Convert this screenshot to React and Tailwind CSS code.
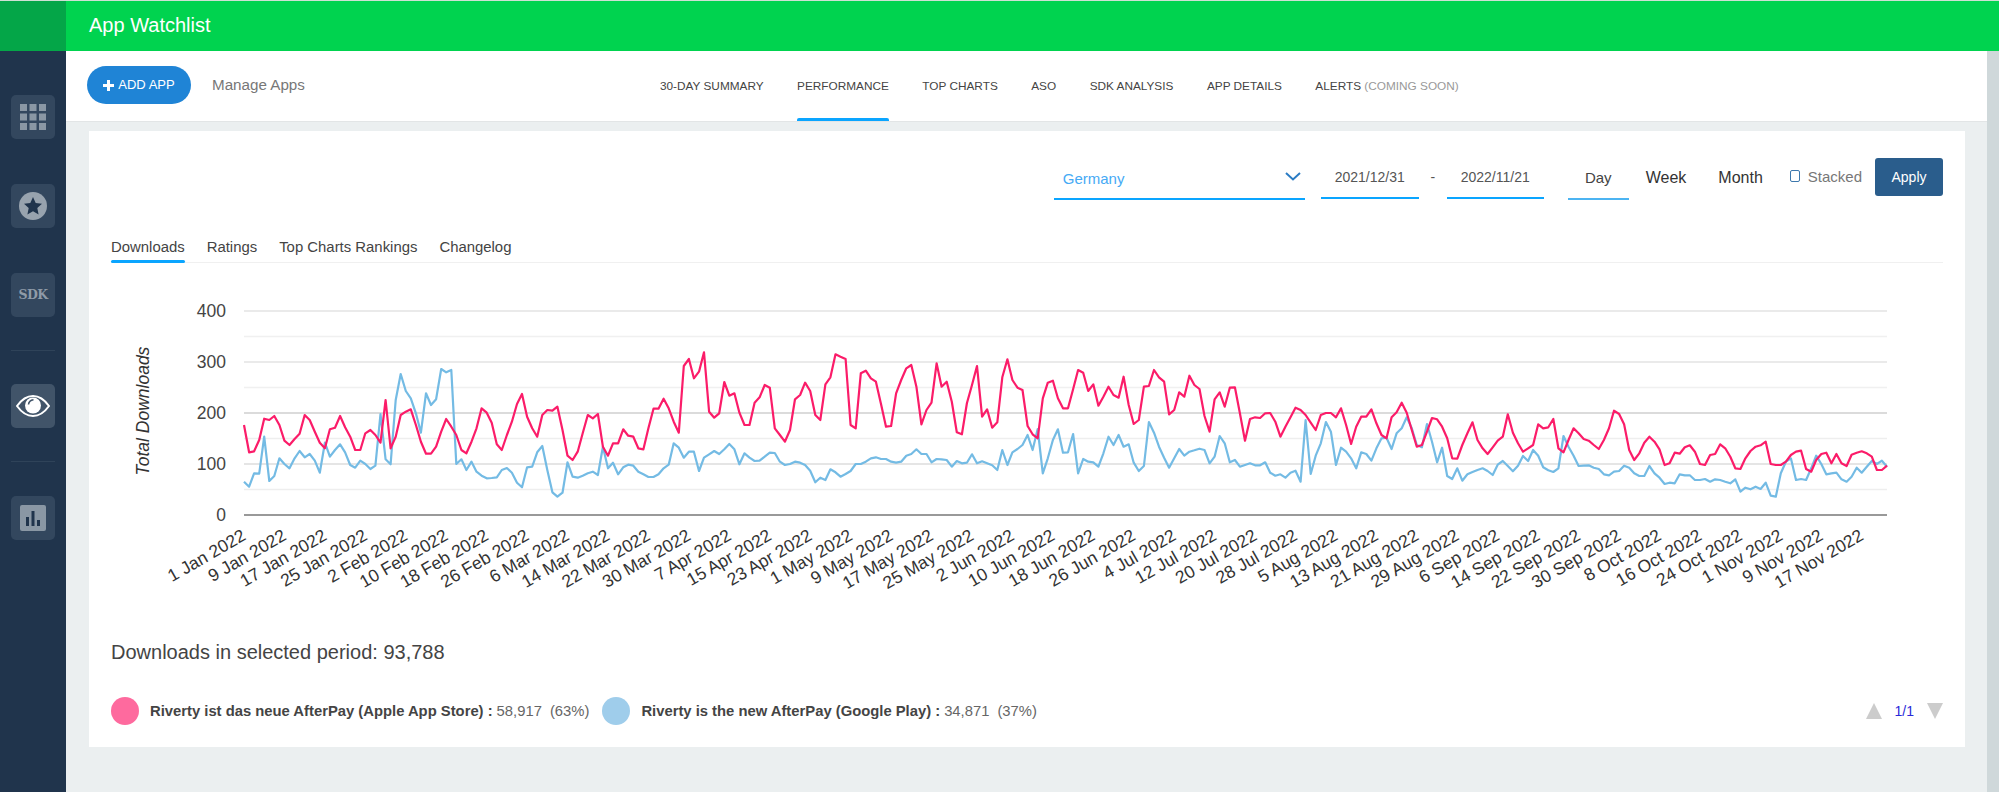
import React from "react";

// traced series: each number is a y position on the chart, 3 units per pixel, 675 = zero line
const PINK = [
  405,487,484,450,386,390,378,405,452,465,447,431,375,390,425,458,475,418,413,378,412,440,480,480,430,420,435,458,330,475,440,375,365,358,405,455,491,491,470,425,387,410,435,480,490,455,415,355,368,398,463,480,435,395,342,312,
  380,415,440,375,360,362,350,420,497,510,485,430,375,385,372,470,497,460,460,418,437,440,475,478,415,356,356,326,355,395,428,228,207,265,245,187,365,383,370,276,317,310,368,405,405,338,322,285,293,415,435,455,420,328,315,278,303,375,390,283,262,193,200,207,405,415,250,242,265,275,342,410,408,310,270,235,225,290,403,360,338,220,
  290,275,335,427,433,340,285,228,380,358,413,397,262,208,270,293,300,408,433,445,325,278,272,325,355,355,298,240,248,303,283,347,320,290,315,323,260,345,402,390,290,288,240,262,275,373,360,307,320,257,285,297,378,425,328,307,350,293,292,370,452,387,382,384,370,369,395,440,410,382,353,360,375,398,420,375,369,369,382,355,
  405,462,410,380,380,358,400,435,445,382,367,338,368,420,470,465,425,384,388,410,445,505,506,465,430,397,450,475,492,472,452,440,373,428,460,485,475,465,403,415,412,387,475,487,450,415,430,447,452,465,477,450,415,362,372,403,480,510,490,458,440,455,478,525,520,488,491,472,466,485,522,525,495,492,463,475,500,535,537,
  505,483,470,466,455,522,525,525,515,495,485,482,537,545,510,492,488,520,492,520,528,494,488,484,490,500,540,540,527,
];

const BLUE = [
  575,590,550,551,440,573,558,505,522,535,505,483,502,492,512,548,458,500,480,463,487,525,533,512,522,537,527,372,508,523,330,252,303,325,370,428,310,345,328,237,247,240,522,508,540,515,545,557,565,564,562,540,534,548,578,592,
  532,530,487,468,540,607,620,608,517,560,563,557,550,545,555,470,535,518,553,532,524,527,545,553,561,561,553,535,524,460,473,503,485,485,543,503,493,483,492,478,462,478,523,490,503,513,512,500,488,489,515,525,522,515,518,525,542,577,563,570,538,547,560,552,543,522,522,515,505,502,507,507,515,518,515,497,492,478,492,492,
  517,507,508,510,530,513,520,518,493,520,514,520,526,540,480,525,487,477,465,435,480,417,550,505,450,418,488,487,432,550,507,515,517,530,490,440,465,435,470,463,518,543,528,396,428,470,503,533,505,477,497,485,481,476,480,520,500,438,460,517,510,530,525,520,526,526,517,548,557,553,563,548,542,575,390,552,497,
  460,396,425,525,473,485,505,535,487,492,512,475,445,443,477,430,415,382,415,465,472,402,455,517,473,558,567,535,572,553,546,540,535,543,555,524,513,528,544,527,498,513,480,497,532,541,546,535,438,470,497,528,527,526,533,537,553,556,545,543,527,533,550,558,558,528,550,563,582,578,580,553,556,556,570,570,567,575,568,570,575,580,568,
  605,593,598,590,597,578,617,620,550,515,505,570,567,570,535,497,522,553,550,548,568,575,560,533,548,530,513,522,512,530,
];

const MONTHS = ["Jan", "Feb", "Mar", "Apr", "May", "Jun", "Jul", "Aug", "Sep", "Oct", "Nov", "Dec"];

// svg starts at page x 89, y 265
const X0 = 155;
const X1 = 1798;
const STEP = (X1 - X0) / 325;
const toY = (v) => 25 + v / 3;
const points = (arr) => arr.map((v, i) => `${(X0 + i * STEP).toFixed(1)},${toY(v).toFixed(1)}`).join(" ");

const GRID = [
  { y: 46, c: "#e3e3e3" },
  { y: 71.5, c: "#f0f0f0" },
  { y: 97, c: "#e3e3e3" },
  { y: 122.5, c: "#f0f0f0" },
  { y: 148, c: "#cfcfcf" },
  { y: 173.5, c: "#eeeeee" },
  { y: 199, c: "#dddddd" },
  { y: 224.5, c: "#eeeeee" },
];

const TICKS = [
  { y: 46, t: "400" },
  { y: 97, t: "300" },
  { y: 148, t: "200" },
  { y: 199, t: "100" },
  { y: 250, t: "0" },
];

const dateLabels = [];
for (let i = 0; i <= 320; i += 8) {
  const d = new Date(Date.UTC(2022, 0, 1 + i));
  dateLabels.push({ i, t: `${d.getUTCDate()} ${MONTHS[d.getUTCMonth()]} 2022` });
}

const Tile = ({ active, children, className }) => (
  <div className={`w-[44px] h-[44px] rounded-[5px] flex items-center justify-center ${active ? "bg-[#415469]" : "bg-[#33475e]"} ${className || ""}`}>
    {children}
  </div>
);

const Sidebar = () => (
  <div className="w-[66px] shrink-0 bg-[#20344c] flex flex-col items-center pt-[44px]">
    <Tile>
      <svg width="26" height="26" viewBox="0 0 26 26" fill="#8a97a4">
        {[0, 9.5, 19].map((y) =>
          [0, 9.5, 19].map((x) => <rect key={`${x}-${y}`} x={x} y={y} width="7" height="7" />)
        )}
      </svg>
    </Tile>
    <Tile className="mt-[45px]">
      <svg width="28" height="28" viewBox="0 0 28 28">
        <circle cx="14" cy="14" r="14" fill="#98a3ae" />
        <polygon points="14,5 16.7,11 23,11.7 18.3,16 19.6,22.4 14,19.2 8.4,22.4 9.7,16 5,11.7 11.3,11" fill="#20344c" />
      </svg>
    </Tile>
    <Tile className="mt-[45px]">
      <span className="text-[12.5px] font-bold text-[#8f9ba8] [font-family:'DejaVu_Serif',serif] tracking-[-0.5px]">SDK</span>
    </Tile>
    <div className="w-[44px] h-px bg-[#2f4359] mt-[33px]" />
    <Tile active className="mt-[33px]">
      <svg width="34" height="22" viewBox="0 0 34 22">
        <path d="M1 11C6 4 11 1 17 1s11 3 16 10c-5 7-10 10-16 10S6 18 1 11z" fill="none" stroke="#fff" strokeWidth="2" />
        <circle cx="17" cy="10.5" r="8" fill="#fff" />
        <path d="M12.5 9.5c.3-2.8 2.2-4.5 5-4.8" fill="none" stroke="#415469" strokeWidth="1.6" />
      </svg>
    </Tile>
    <div className="w-[44px] h-px bg-[#2f4359] mt-[33px]" />
    <Tile className="mt-[34px]">
      <svg width="26" height="26" viewBox="0 0 26 26">
        <rect width="26" height="26" rx="2" fill="#8a97a4" />
        <rect x="6" y="12" width="3" height="9" fill="#20344c" />
        <rect x="11.5" y="6" width="3" height="15" fill="#20344c" />
        <rect x="17" y="15" width="3" height="6" fill="#20344c" />
      </svg>
    </Tile>
  </div>
);

const NAV = ["30-DAY SUMMARY", "PERFORMANCE", "TOP CHARTS", "ASO", "SDK ANALYSIS", "APP DETAILS"];

const SubNav = () => (
  <div className="h-[71px] bg-white border-b border-[#e2e5e6] flex pl-[21px]">
    <button className="w-[104px] h-[38px] mt-[15px] rounded-full bg-[#1f84d6] text-white text-[13px] flex items-center justify-center gap-[4px]">
      <svg width="11" height="11" viewBox="0 0 11 11" fill="#fff">
        <rect x="4" width="3" height="11" />
        <rect y="4" width="11" height="3" />
      </svg>
      ADD APP
    </button>
    <div className="w-[94px] ml-[21px] text-[15.2px] whitespace-nowrap text-[#777] flex items-center h-[68px]">Manage Apps</div>
    <div className="ml-[354px] flex gap-[33.5px] text-[11.8px] text-[#444]">
      {NAV.map((n) => (
        <div key={n} className="relative flex items-center pt-[1px] h-[70px]">
          {n}
          {n === "PERFORMANCE" && <div className="absolute left-0 right-0 bottom-0 h-[3px] rounded-t-[2px] bg-[#0aa5ff]" />}
        </div>
      ))}
      <div className="flex items-center pt-[1px] h-[70px]">
        ALERTS&nbsp;<span className="text-[#999]">(COMING SOON)</span>
      </div>
    </div>
  </div>
);

const FilterRow = () => (
  <div className="flex items-start justify-end pt-[27px] pr-[22px] text-[14px]">
    <div className="w-[251px] h-[42px] border-b-2 border-[#0aa5ff] flex items-center justify-between pl-[9px] pr-[4px] pt-[2px] text-[15px] text-[#46aaf5]">
      Germany
      <svg width="16" height="9" viewBox="0 0 16 9" className="-mt-[6px]">
        <polyline points="1,1 8,7.5 15,1" fill="none" stroke="#2b7cc4" strokeWidth="2" />
      </svg>
    </div>
    <div className="w-[98px] ml-[16px] h-[41px] border-b-2 border-[#0aa5ff] flex items-center justify-center text-[#555]">2021/12/31</div>
    <div className="w-[28px] h-[39px] flex items-center justify-center text-[#555]">-</div>
    <div className="w-[97px] h-[41px] border-b-2 border-[#0aa5ff] flex items-center justify-center text-[#555]">2022/11/21</div>
    <div className="w-[61px] ml-[24px] h-[42px] border-b-2 border-[#4cb4f2] flex items-center justify-center text-[15px] text-[#444]">Day</div>
    <div className="ml-[17px] h-[40px] flex items-center text-[16px] text-[#333]">Week</div>
    <div className="ml-[32px] h-[40px] flex items-center text-[16px] text-[#333]">Month</div>
    <div className="ml-[27px] w-[10px] h-[12px] mt-[12px] rounded-[2px] border border-[#3d78ad]" />
    <div className="ml-[8px] h-[38px] flex items-center text-[15px] text-[#777]">Stacked</div>
    <button className="ml-[13px] w-[68px] h-[38px] rounded-[3px] bg-[#2a5d8c] text-white">Apply</button>
  </div>
);

const CardTabs = () => (
  <div className="mt-[36px] mx-[22px] border-b border-[#f0f0f0] flex gap-[22px] text-[14.9px] text-[#444] h-[27px]">
    <div className="relative">
      Downloads
      <div className="absolute left-0 right-0 -bottom-px h-[3px] rounded-[2px] bg-[#0aa5ff]" />
    </div>
    <div>Ratings</div>
    <div>Top Charts Rankings</div>
    <div>Changelog</div>
  </div>
);

const Chart = () => (
  <svg className="block mt-[2px] w-[1876px] h-[365px] [font-family:'Liberation_Sans',sans-serif]" viewBox="0 0 1876 365">
    {GRID.map((g) => (
      <line key={g.y} x1={X0} x2={X1} y1={g.y} y2={g.y} stroke={g.c} strokeWidth="1.5" />
    ))}
    <line x1={X0} x2={X1} y1="250" y2="250" stroke="#999" strokeWidth="2" />
    {TICKS.map((t) => (
      <text key={t.t} x="137" y={t.y + 6} textAnchor="end" fontSize="17.5" fill="#444">
        {t.t}
      </text>
    ))}
    <text x="0" y="0" transform="translate(60 146) rotate(-90)" textAnchor="middle" fontSize="17.5" fontStyle="italic" fill="#333">
      Total Downloads
    </text>
    {dateLabels.map((l) => (
      <text
        key={l.i}
        x="0"
        y="0"
        transform={`translate(${X0 + l.i * STEP + 3} ${274}) rotate(-30)`}
        textAnchor="end"
        fontSize="17.5"
        fill="#333"
      >
        {l.t}
      </text>
    ))}
    <polyline points={points(BLUE)} fill="none" stroke="#74bbe4" strokeWidth="2.2" strokeLinejoin="round" />
    <polyline points={points(PINK)} fill="none" stroke="#fb1c69" strokeWidth="2.2" strokeLinejoin="round" />
  </svg>
);

const LegendItem = ({ color, name, count, pct, className }) => (
  <div className={`flex items-center ${className || ""}`}>
    <div className={`w-[28px] h-[28px] rounded-full ${color}`} />
    <span className="ml-[11px] font-bold text-[#444]">{name} :</span>
    <span className="ml-[4px] text-[#666]">{count}</span>
    <span className="ml-[8px] text-[#666]">({pct})</span>
  </div>
);

export default function App() {
  return (
    <div className="w-[1999px] h-[792px] overflow-hidden flex flex-col bg-[#ebeff0] [font-family:'Liberation_Sans',Arial,sans-serif]">
      <div className="h-[51px] shrink-0 flex border-t border-[#cfe0d4] bg-[#00d34f]">
        <div className="w-[66px] bg-[#04a648]" />
        <div className="ml-[23px] text-[20px] text-white leading-[49px]">App Watchlist</div>
      </div>
      <div className="flex-1 flex min-h-0">
        <Sidebar />
        <div className="flex-1 min-w-0 flex flex-col">
          <SubNav />
          <div className="flex-1 flex pl-[23px] pr-[34px] pt-[9px]">
            <div className="w-[1876px] h-[616px] bg-white">
              <FilterRow />
              <CardTabs />
              <Chart />
              <div className="mt-[10px] ml-[22px] text-[20px] leading-[24px] text-[#444]">Downloads in selected period: 93,788</div>
              <div className="mt-[33px] mx-[22px] flex items-center text-[14.8px]">
                <LegendItem color="bg-[#fe6a9e]" name="Riverty ist das neue AfterPay (Apple App Store)" count="58,917" pct="63%" />
                <LegendItem className="ml-[13px]" color="bg-[#9fcdeb]" name="Riverty is the new AfterPay (Google Play)" count="34,871" pct="37%" />
                <div className="ml-auto flex items-center">
                  <div className="w-0 h-0 border-x-[8px] border-x-transparent border-b-[16px] border-b-[#cccccc]" />
                  <span className="ml-[13px] text-[14px] text-[#2a2ad8]">1/1</span>
                  <div className="ml-[13px] w-0 h-0 border-x-[8px] border-x-transparent border-t-[16px] border-t-[#cccccc]" />
                </div>
              </div>
            </div>
          </div>
        </div>
        <div className="w-[12px] shrink-0 bg-[#cfd8da]" />
      </div>
    </div>
  );
}
